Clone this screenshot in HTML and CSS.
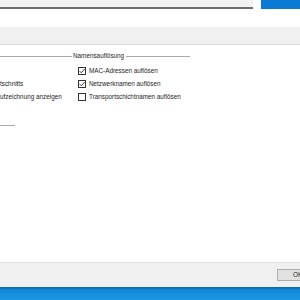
FILE: index.html
```html
<!DOCTYPE html>
<html>
<head>
<meta charset="utf-8">
<link rel="stylesheet" href="styles.css">
</head>
<body>
<div class="screen">
  <div class="topbar">
    <div class="frame"></div>
    <div class="gap"></div>
    <div class="desktop"></div>
  </div>
  <div class="spacer"></div>
  <div class="band"></div>
  <div class="main">
    <div class="groups">
      <div class="group left">
        <div class="ghead"><span class="gline"></span></div>
        <div class="rows">
          <div class="row"></div>
          <div class="row"><span class="label">tschnitts</span></div>
          <div class="row"><span class="label">ufzeichnung anzeigen</span></div>
        </div>
        <div class="sep"></div>
      </div>
      <div class="group right">
        <div class="ghead"><span class="gstub"></span><span class="gtitle">Namensauflösung</span><span class="gline"></span></div>
        <div class="rows">
          <div class="row"><span class="cb"><svg viewBox="0 0 8 8" width="8" height="8"><path d="M1.6 4.1 L3.3 5.8 L6.6 2" fill="none" stroke="#222" stroke-width="0.9"/></svg></span><span class="label">MAC-Adressen auflösen</span></div>
          <div class="row"><span class="cb"><svg viewBox="0 0 8 8" width="8" height="8"><path d="M1.6 4.1 L3.3 5.8 L6.6 2" fill="none" stroke="#222" stroke-width="0.9"/></svg></span><span class="label">Netzwerknamen auflösen</span></div>
          <div class="row"><span class="cb"></span><span class="label">Transportschichtnamen auflösen</span></div>
        </div>
      </div>
    </div>
  </div>
  <div class="footer">
    <div class="btn">OK</div>
  </div>
  <div class="taskbar"></div>
</div>
</body>
</html>
```
FILE: styles.css
```css
html, body {
  margin: 0;
  padding: 0;
}
body {
  width: 300px;
  height: 300px;
  overflow: hidden;
  background: #ffffff;
  font-family: "Liberation Sans", Arial, sans-serif;
  font-size: 6.35px;
  color: #1e1e1e;
}
.screen {
  display: flex;
  flex-direction: column;
  width: 300px;
  height: 300px;
}
.topbar {
  display: flex;
  height: 9px;
  flex: none;
}
.frame {
  width: 253px;
  height: 7px;
  background: #f2f2f2;
  border-bottom: 2px solid #6e6e6e;
}
.gap {
  width: 8px;
  background: #fbfbfb;
}
.desktop {
  flex: 1;
  background: #0b7ad4;
}
.spacer {
  height: 18px;
  flex: none;
  background: #ffffff;
}
.band {
  height: 17px;
  flex: none;
  background: #f0f0f0;
  border-bottom: 1px solid #dcdcdc;
}
.main {
  flex: 1;
  padding-top: 8px;
  background: #ffffff;
}
.groups {
  display: flex;
}
.group.left {
  width: 68px;
}
.group.right {
  width: 122px;
}
.ghead {
  display: flex;
  align-items: center;
  height: 6px;
  margin-bottom: 5px;
}
.gline {
  flex: 1;
  height: 1px;
  background: #a9a9a9;
}
.gstub {
  width: 4px;
  height: 1px;
  background: #a9a9a9;
}
.gtitle {
  margin: 0 2px 0 1px;
  line-height: 6px;
  white-space: nowrap;
}
.rows {
  display: flex;
  flex-direction: column;
}
.row {
  display: flex;
  align-items: center;
  height: 13px;
  white-space: nowrap;
}
.group.right .row {
  padding-left: 10px;
}
.cb {
  display: block;
  width: 8px;
  height: 8px;
  box-sizing: border-box;
  border: 1px solid #333333;
  background: #ffffff;
  margin-right: 3px;
  position: relative;
}
.cb svg {
  display: block;
  margin: -1px 0 0 -1px;
}
.label {
  line-height: 8px;
}
.sep {
  width: 15px;
  height: 1px;
  background: #a9a9a9;
  margin-top: 22px;
}
.footer {
  height: 24px;
  flex: none;
  background: #f0f0f0;
  border-top: 1px solid #dfdfdf;
  display: flex;
  align-items: flex-start;
  padding-top: 6px;
  box-sizing: border-box;
  height: 25px;
  padding-left: 277px;
}
.btn {
  flex: none;
  width: 50px;
  height: 12px;
  box-sizing: border-box;
  background: #e1e1e1;
  border: 1px solid #adadad;
  padding-left: 15px;
  line-height: 10px;
  white-space: nowrap;
}
.taskbar {
  height: 13px;
  flex: none;
  background: linear-gradient(#0a64b4 0px, #1389d9 3px, #1a97e3 13px);
}
```
